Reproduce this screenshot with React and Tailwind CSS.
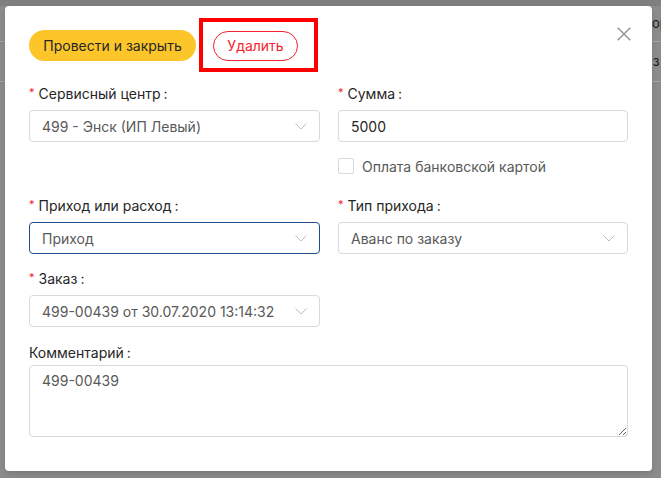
import React from "react";

const font = { fontFamily: "Inter, 'Noto Sans', sans-serif" };

function Chevron() {
  return (
    <svg width="12" height="7" viewBox="0 0 12 7" className="shrink-0">
      <path d="M0.5 0.5 L6 6 L11.5 0.5" fill="none" stroke="#bfbfbf" strokeWidth="1" />
    </svg>
  );
}

function Label({ text, required = true }) {
  return (
    <div className="h-[22px] flex items-center text-[14px] text-[#262626]">
      {required && <span className="text-[#f5222d] text-[11px] mr-[4px] -mt-[2px]">*</span>}
      <span>{text}</span>
      <span className="ml-[3px]">:</span>
    </div>
  );
}

function Select({ value, focused }) {
  return (
    <div
      className={
        "h-[32px] rounded-[4px] border flex items-center justify-between px-[12px] text-[14px] text-[#595959] bg-white " +
        (focused ? "border-[#1f4e8c]" : "border-[#d9d9d9]")
      }
    >
      <span className="truncate">{value}</span>
      <Chevron />
    </div>
  );
}

export default function App() {
  return (
    <div className="relative w-[661px] h-[478px] overflow-hidden bg-[#8b8b8b]" style={font}>
      {/* page behind the mask */}
      <div className="flex flex-col">
        <div className="h-[6px] bg-[#7f7f7f]" />
        <div className="h-[36px] border-b border-[#a3a3a3] flex items-center pl-[652px] text-[13px] text-[#1a1a1a] whitespace-nowrap overflow-hidden">
          ор
        </div>
        <div className="h-[40px] border-b border-[#a3a3a3] flex items-center pl-[653px] text-[13px] text-[#1a1a1a] whitespace-nowrap overflow-hidden">
          з
        </div>
      </div>

      {/* modal */}
      <div className="absolute left-[5px] top-[6px] w-[647px] h-[465px] bg-white rounded-[4px] shadow-md px-[24px] pt-[24px]">
        <button className="absolute right-[21px] top-[21px] w-[14px] h-[14px] flex">
          <svg width="14" height="14" viewBox="0 0 14 14">
            <path d="M0.7 0.7 L13.3 13.3 M13.3 0.7 L0.7 13.3" stroke="#8c8c8c" strokeWidth="1.3" fill="none" />
          </svg>
        </button>

        <div className="flex items-center h-[31px]">
          <button className="h-[31px] w-[167px] rounded-full bg-[#fcc62a] text-[14px] text-[#262626]">
            Провести и закрыть
          </button>
          <button className="ml-[17px] h-[30px] w-[85px] rounded-full border border-[#f5222d] text-[14px] text-[#f5222d] bg-white">
            Удалить
          </button>
        </div>

        <div className="mt-[21px] flex gap-[18px]">
          <div className="w-[291px]">
            <Label text="Сервисный центр" />
            <div className="mt-[6px]">
              <Select value="499 - Энск (ИП Левый)" />
            </div>
          </div>
          <div className="w-[290px]">
            <Label text="Сумма" />
            <div className="mt-[6px] h-[32px] rounded-[4px] border border-[#d9d9d9] flex items-center px-[12px] text-[14px] text-[#262626]">
              5000
            </div>
            <div className="mt-[16px] h-[16px] flex items-center gap-[8px]">
              <span className="w-[16px] h-[16px] border border-[#d9d9d9] rounded-[2px] bg-white" />
              <span className="text-[14px] text-[#595959]">Оплата банковской картой</span>
            </div>
          </div>
        </div>

        <div className="mt-[20px] flex gap-[18px]">
          <div className="w-[291px]">
            <Label text="Приход или расход" />
            <div className="mt-[6px]">
              <Select value="Приход" focused />
            </div>
          </div>
          <div className="w-[290px]">
            <Label text="Тип прихода" />
            <div className="mt-[6px]">
              <Select value="Аванс по заказу" />
            </div>
          </div>
        </div>

        <div className="mt-[13px] w-[291px]">
          <Label text="Заказ" />
          <div className="mt-[6px]">
            <Select value="499-00439 от 30.07.2020 13:14:32" />
          </div>
        </div>

        <div className="mt-[14px]">
          <Label text="Комментарий" required={false} />
          <textarea
            readOnly
            defaultValue="499-00439"
            className="mt-[2px] block w-[599px] h-[72px] rounded-[4px] border border-[#d9d9d9] px-[12px] py-[4px] text-[14px] text-[#595959] leading-[22px] outline-none resize"
          />
        </div>
      </div>

      {/* highlight frame */}
      <div className="absolute left-[199px] top-[18px] w-[119px] h-[54px] border-[4px] border-[#ff0000]" />
    </div>
  );
}
